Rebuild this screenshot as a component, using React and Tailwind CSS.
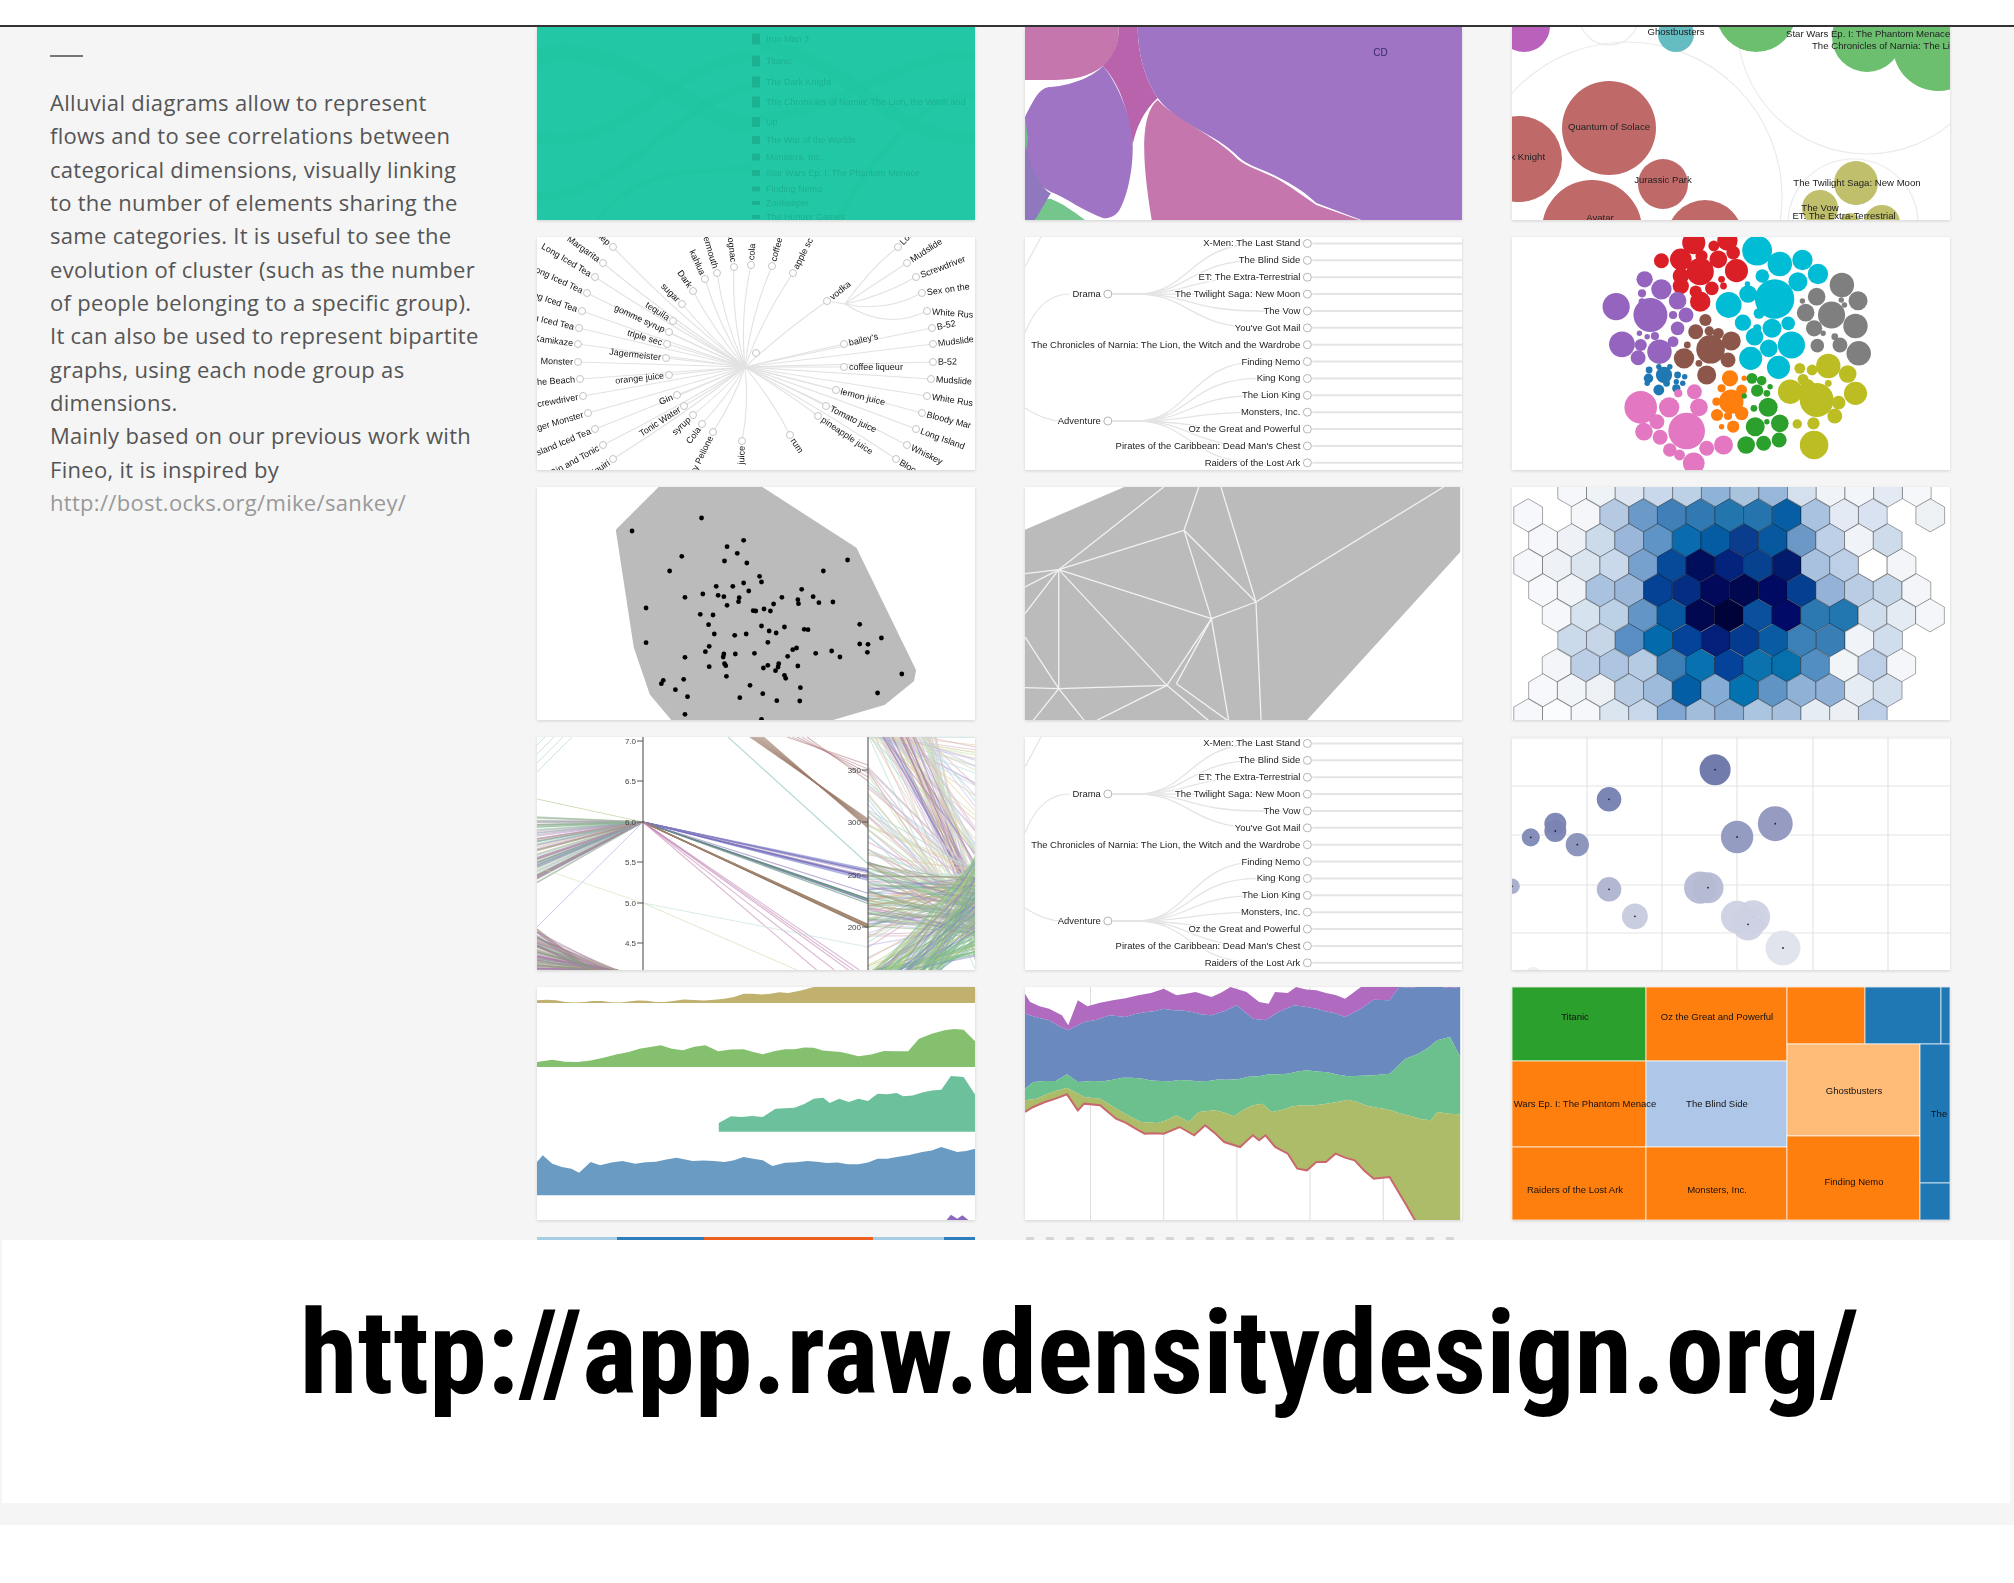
import React from 'react';

// dados dos gráficos, medidos a partir da referência
const SANS = 'Liberation Sans, Arial, sans-serif';

const movies = [
  'X-Men: The Last Stand', 'The Blind Side', 'ET: The Extra-Terrestrial', 'The Twilight Saga: New Moon',
  'The Vow', "You've Got Mail", 'The Chronicles of Narnia: The Lion, the Witch and the Wardrobe', 'Finding Nemo',
  'King Kong', 'The Lion King', 'Monsters, Inc.', 'Oz the Great and Powerful',
  "Pirates of the Caribbean: Dead Man's Chest", 'Raiders of the Lost Ark',
];

const Card = ({ children, className = 'h-[233px]' }) => (
  <div className={`bg-white overflow-hidden shadow-[0_1px_3px_rgba(0,0,0,0.14)] ${className}`}>{children}</div>
);

const Chart = ({ h = 233, children }) => (
  <svg viewBox={`0 0 438 ${h}`} width="100%" height={h} preserveAspectRatio="none" className="block blur-[0.7px]" fontFamily={SANS}>
    {children}
  </svg>
);

const Alluvial = () => {
  const labels = [
    ['Iron Man 3', 12, 11], ['Titanic', 34, 11], ['The Dark Knight', 55, 11],
    ['The Chronicles of Narnia: The Lion, the Witch and', 75, 11], ['Up', 95, 10], ['The War of the Worlds', 113, 8],
    ['Monsters, Inc.', 130, 7], ['Star Wars Ep. I: The Phantom Menace', 146, 6], ['Finding Nemo', 162, 5],
    ['Zookeeper', 176, 4], ['The Hunger Games', 190, 4],
  ];
  return (
    <Chart h={193}>
      <rect width="438" height="193" fill="#22c8a5" />
      <g fill="none" stroke="#1dbf9c" strokeOpacity="0.22">
        <path d="M0 30C90 10 150 90 215 100" strokeWidth="16" />
        <path d="M0 110C80 130 140 30 215 30" strokeWidth="10" />
        <path d="M0 170C90 170 140 70 215 60" strokeWidth="8" />
        <path d="M223 20C300 20 360 120 438 110" strokeWidth="12" />
        <path d="M223 90C300 90 370 20 438 30" strokeWidth="9" />
        <path d="M60 193C110 130 170 150 215 140" strokeWidth="5" />
        <path d="M300 193C340 120 400 60 438 70" strokeWidth="5" />
      </g>
      {labels.map(([t, y, bar]) => (
        <g key={t}>
          <rect x="215" y={y - bar / 2} width="8" height={bar} fill="#1cb191" />
          <text x="229" y={y + 3} fontSize="9" fill="#1cb191">{t}</text>
        </g>
      ))}
    </Chart>
  );
};

const Flows = () => (
  <Chart h={193}>
    <rect width="438" height="193" fill="#fff" />
    <path d="M0 0H94C94 25 85 35 78 39C65 50 45 53 30 53H0Z" fill="#c576ad" />
    <path d="M94 0H113C113 30 122 55 133 71C118 85 112 100 108 117C104 90 98 60 78 39C88 30 94 20 94 0Z" fill="#b863ab" />
    <path d="M113 0H438V193H337L292 176C280 165 272 160 259 153C240 142 225 140 214 130C190 105 155 100 133 71C122 55 113 30 113 0Z" fill="#a074c4" />
    <path d="M133 73C150 92 190 108 213 132C225 142 240 144 258 155C270 162 280 170 292 178L335 193H127C120 150 112 90 133 73Z" fill="#c576ad" />
    <path d="M78 39C92 55 108 90 108 120C108 150 100 175 94 184C90 190 82 192 78 191C60 185 40 170 26 165C10 155 0 150 0 135V90C10 70 15 60 26 60C50 58 70 48 78 39Z" fill="#a074c4" />
    <path d="M0 90L3 112L0 130Z" fill="#6cc08a" />
    <path d="M26 172C35 175 50 185 60 193H10C14 180 20 170 26 172Z" fill="#75c68c" />
    <path d="M0 120C10 150 20 165 26 166L10 193H0Z" fill="#8f78bd" />
    <text x="349" y="29" fontSize="10" fill="#3a2a66">CD</text>
  </Chart>
);

const Packed = () => {
  const circles = [
    [97, 101, 47, '#bf6a69'], [7, 132, 43, '#bf6a69'], [151, 157, 25, '#bf6a69'], [80, 203, 50, '#bf6a69'],
    [193, 211, 38, '#bf6a69'], [-8, 209, 14, '#bf6a69'], [244, -15, 40, '#6cbf6f'], [355, 10, 35, '#6cbf6f'],
    [426, 19, 45, '#6cbf6f'], [12, -1, 26, '#ba62bb'], [164, 7, 18, '#66bdc1'],
    [344, 156, 22, '#bfbf6c'], [308, 181, 18, '#bfbf6c'], [370, 196, 18, '#bfbf6c'], [338, 196, 10, '#bfbf6c'],
  ];
  const lines = [
    ['Ghostbusters', 164, 8, 'middle'], ['Star Wars Ep. I: The Phantom Menace', 274, 10, 'start'],
    ['The Chronicles of Narnia: The Lion, the Witch and the Wardrobe', 300, 22, 'start'], ['Quantum of Solace', 97, 103, 'middle'],
    ['Dark Knight', 8, 133, 'middle'], ['Jurassic Park', 151, 156, 'middle'], ['Avatar', 88, 194, 'middle'],
    ['The Twilight Saga: New Moon', 345, 159, 'middle'], ['The Vow', 308, 184, 'middle'],
    ['ET: The Extra-Terrestrial', 332, 192, 'middle'],
  ];
  return (
    <Chart h={193}>
      <rect width="438" height="193" fill="#fff" />
      <g fill="none" stroke="#ebebeb" strokeWidth="1.2">
        <circle cx="115" cy="170" r="155" />
        <circle cx="355" cy="-3" r="130" />
        <circle cx="341" cy="197" r="65" />
        <circle cx="97" cy="-12" r="30" />
      </g>
      {circles.map(([x, y, r, c], i) => <circle key={i} cx={x} cy={y} r={r} fill={c} />)}
      {lines.map(([t, x, y, a]) => <text key={t} x={x} y={y} fontSize="9.6" textAnchor={a} fill="#222">{t}</text>)}
    </Chart>
  );
};

const radialNodes = [
  [76, 10, 'Mint Julep'], [66, 26, 'Margarita'], [58, 40, 'Long Iced Tea'], [50, 56, 'Long Iced Tea'], [45, 74, 'Long Iced Tea'],
  [42, 91, 'Long Iced Tea'], [41, 107, 'Kamikaze'], [41, 125, 'Monster'], [43, 142, 'Sex on the Beach'], [46, 159, 'Screwdriver'],
  [51, 176, 'Jager Monster'], [58, 192, 'Island Iced Tea'], [66, 208, 'Gin and Tonic'], [76, 222, 'Daiquiri'],
  [145, 67, 'sugar'], [136, 84, 'tequila'], [132, 95, 'gomme syrup'], [130, 107, 'triple sec'], [129, 121, 'Jagermeister'],
  [132, 138, 'orange juice'], [140, 158, 'Gin'], [147, 169, 'Tonic Water'], [156, 178, 'syrup'], [165, 187, 'Cola'],
  [176, 195, 'Cherry Pellone'], [205, 204, 'juice'], [253, 198, 'rum'], [156, 54, 'Dark'], [168, 42, 'kahlua'], [180, 36, 'vermouth'],
  [197, 30, 'cognac'], [214, 28, 'cola'], [235, 29, 'coffee'], [256, 36, 'apple sc'], [290, 64, 'vodka'],
  [395, 91, 'B-52'], [396, 107, 'Mudslide'], [396, 125, 'B-52'], [394, 142, 'Mudslide'], [390, 159, 'White Rus'],
  [385, 176, 'Bloody Mar'], [379, 192, 'Long Island'], [370, 208, 'Whiskey'], [359, 222, 'Bloody'],
  [307, 107, "bailey's"], [307, 130, 'coffee liqueur'], [299, 153, 'lemon juice'], [289, 169, 'Tomato juice'], [281, 179, 'pineapple juice'],
];
const vodkaNodes = [[361, 10, 'Long'], [370, 26, 'Mudslide'], [379, 40, 'Screwdriver'], [385, 56, 'Sex on the'], [390, 74, 'White Rus']];

const Radial = () => {
  const cx = 208;
  const cy = 130;
  const label = ([x, y, t], ox, oy) => {
    const ang = (Math.atan2(y - oy, x - ox) * 180) / Math.PI;
    const left = x < ox;
    return (
      <text key={t + x} transform={`translate(${x} ${y}) rotate(${left ? ang + 180 : ang})`} x={left ? -5 : 5} y="3" fontSize="9" textAnchor={left ? 'end' : 'start'} fill="#111">{t}</text>
    );
  };
  return (
    <Chart>
      <rect width="438" height="233" fill="#fff" />
      <g fill="none" stroke="#e2e2e2" strokeWidth="1.1">
        {radialNodes.map(([x, y, t]) => <path key={t + x} d={`M${cx} ${cy}Q${(cx + x) / 2 + (y - cy) * 0.08} ${(cy + y) / 2} ${x} ${y}`} />)}
        {vodkaNodes.map(([x, y, t]) => <path key={t} d={`M308 67Q${(308 + x) / 2} ${y + 20} ${x} ${y}`} />)}
        <path d="M290 64L308 67" />
      </g>
      <g fill="#fff" stroke="#c4c4c4">
        {[...radialNodes, ...vodkaNodes, [219, 116, '']].map(([x, y], i) => <circle key={i} cx={x} cy={y} r="3.5" />)}
      </g>
      {radialNodes.map((n) => label(n, cx, cy))}
      {vodkaNodes.map((n) => label(n, 308, 67))}
    </Chart>
  );
};

const Dendrogram = () => (
  <Chart>
    <rect width="438" height="233" fill="#fff" />
    <g fill="none" stroke="#e4e4e4">
      {movies.map((_, i) => {
        const y = 6.5 + i * 16.87;
        const from = i < 6 ? 57 : 184;
        return (
          <g key={i}>
            <line x1="288" y1={y} x2="438" y2={y} strokeWidth="2" />
            {i !== 6 && <path d={`M88 ${from}H112C165 ${from} 165 ${y} 235 ${y}H270`} strokeWidth="1.3" />}
          </g>
        );
      })}
      <path d="M0 96C10 70 25 57 45 57" strokeWidth="1.2" />
      <path d="M0 171C15 180 25 184 38 184" strokeWidth="1.2" />
      <path d="M16 0L0 30" strokeWidth="1.2" />
    </g>
    {movies.map((m, i) => {
      const y = 6.5 + i * 16.87;
      return (
        <g key={m}>
          <text x="276" y={y + 3} fontSize="9.5" textAnchor="end" fill="#222" stroke="#fff" strokeWidth="2.5" paintOrder="stroke">{m}</text>
          <circle cx="283" cy={y} r="4" fill="#fff" stroke="#b4b4b4" />
        </g>
      );
    })}
    {[['Drama', 57], ['Adventure', 184]].map(([t, y]) => (
      <g key={t}>
        <text x="76" y={y + 3} fontSize="9.5" textAnchor="end" fill="#222">{t}</text>
        <circle cx="83" cy={y} r="4" fill="#fff" stroke="#b4b4b4" />
      </g>
    ))}
  </Chart>
);

const packGroups = [
  ['#db1f26', [[1072,728,17],[1124,722,15],[1022,782,11],[1052,778,16],[1082,815,20],[1110,778,13],[1133,758,10],[1103,738,8],[1138,812,17],[1084,768,9],[1052,828,12],[1082,905,15],[1052,858,12],[1100,865,10],[1075,875,9],[1118,858,5],[1115,838,5]]],
  ['#00bcd4', [[1170,752,22],[1205,792,18],[1240,780,15],[1264,822,15],[1233,845,14],[1197,897,29],[1156,882,13],[1178,828,10],[1126,915,19],[1148,968,12],[1173,940,8],[1193,985,14],[1218,970,10],[1166,1010,13],[1223,1035,20],[1188,1045,13],[1160,1075,17],[1203,1102,17],[1155,852,4],[1170,985,6]]],
  ['#7f7f7f', [[1301,855,18],[1326,902,14],[1262,890,13],[1245,938,13],[1285,945,20],[1322,978,18],[1258,985,12],[1263,1037,10],[1298,1035,11],[1327,1060,18],[1240,903,4],[1300,900,4],[1305,915,4],[1272,1000,4],[1290,1010,5]]],
  ['#9564bf', [[996,838,12],[1022,868,15],[992,880,6],[952,920,20],[1005,945,25],[1047,902,13],[1060,945,11],[1040,945,6],[1047,985,10],[992,905,5],[961,1033,19],[1019,1055,18],[986,1073,11],[990,1035,9],[1040,1025,8],[1012,1008,6],[988,1000,4],[1000,1010,4]]],
  ['#8c564b', [[1090,960,9],[1075,995,11],[1098,1048,21],[1130,1023,14],[1057,1075,15],[1092,1125,14],[1110,1000,8],[1096,993,7],[1125,1080,11],[1062,1035,5],[1080,1090,5]]],
  ['#1f77b4', [[1026,1125,12],[1003,1110,5],[1002,1135,7],[1018,1170,8],[1045,1165,6],[1047,1125,5],[1058,1130,4],[1035,1100,4],[1000,1150,4],[1055,1150,4],[1030,1150,5],[1045,1145,4],[1018,1100,4]]],
  ['#ff7f0e', [[1128,1135,12],[1130,1205,18],[1108,1245,9],[1146,1240,10],[1125,1248,6],[1133,1280,9],[1146,1170,8],[1107,1205,6],[1115,1165,6],[1150,1135,4],[1115,1280,4]]],
  ['#2ca02c', [[1162,1135,8],[1177,1142,7],[1170,1172,9],[1187,1222,14],[1150,1188,4],[1165,1225,5],[1205,1270,13],[1167,1280,14],[1204,1320,11],[1153,1335,13],[1180,1330,11],[1185,1180,5],[1190,1160,4],[1185,1265,4]]],
  ['#bcbd22', [[1280,1098,18],[1310,1122,13],[1221,1175,18],[1262,1200,25],[1322,1180,17],[1296,1208,10],[1290,1248,11],[1258,1335,21],[1248,1160,11],[1236,1105,8],[1255,1110,8],[1241,1138,8],[1232,1272,7],[1257,1270,9],[1280,1150,5]]],
  ['#e377c2', [[990,1222,24],[1034,1222,15],[1061,1293,27],[1073,1175,11],[1080,1222,13],[1015,1265,11],[995,1295,13],[1020,1312,11],[1035,1350,10],[1092,1345,11],[1118,1335,14],[1050,1365,8],[1072,1390,16],[1048,1180,6]]],
];

const CirclePacking = () => (
  <Chart>
    <rect width="438" height="233" fill="#fff" />
    {packGroups.map(([c, list]) => list.map(([x, y, r], i) => (
      <circle key={`${c}-${i}`} cx={(x - 791) / 1.546} cy={y / 3 - 237} r={(r * 1.05) / 1.546} fill={c} />
    )))}
  </Chart>
);

// pontos do convex hull, em coordenadas do zoom
const hullDots = [[284,113],[175,152],[350,180],[324,199],[340,219],[253,228],[320,242],[355,248],[513,239],[234,272],[475,272],[375,288],[378,305],[350,308],[333,318],[307,318],[358,332],[441,327],[286,341],[310,345],[319,349],[258,351],[343,352],[410,351],[459,349],[435,358],[436,370],[468,367],[490,365],[342,364],[324,375],[397,371],[197,383],[382,386],[365,391],[369,392],[392,392],[282,402],[302,404],[295,433],[378,437],[414,440],[445,447],[451,448],[390,452],[401,458],[304,461],[354,461],[336,465],[532,432],[566,473],[388,486],[197,487],[532,491],[545,492],[296,498],[433,503],[427,508],[290,514],[488,512],[463,519],[544,516],[501,530],[337,521],[319,521],[367,519],[318,530],[258,531],[419,528],[388,555],[405,550],[381,563],[296,559],[320,550],[322,556],[404,560],[400,571],[435,557],[414,585],[416,594],[323,588],[598,581],[256,597],[224,600],[221,610],[360,615],[439,622],[243,628],[380,640],[560,638],[262,649],[344,652],[402,661],[438,662],[258,702],[378,717]];
const hx = (z) => (z - 26) / 1.568;
const hy = (z) => (z - 20) / 3;

const Hull = () => {
  const poly = [[220,20],[375,20],[525,205],[618,570],[615,600],[570,670],[480,720],[240,720],[205,640],[180,500],[152,150]];
  return (
    <Chart>
      <rect width="438" height="233" fill="#fff" />
      <polygon points={poly.map(([x, y]) => `${hx(x)},${hy(y)}`).join(' ')} fill="#bbb" stroke="#bbb" strokeWidth="3" strokeLinejoin="round" />
      {hullDots.map(([x, y], i) => <circle key={i} cx={hx(x)} cy={hy(y)} r="2.4" fill="#000" />)}
    </Chart>
  );
};

const Voronoi = () => {
  const vx = (z) => (z - 792) / 1.568;
  const segs = [[845,268,1010,20],[1042,150,1065,20],[1100,20,1155,365],[1450,20,1155,365],[845,268,1042,150],[1042,150,1085,415],[1042,150,1155,365],[1085,415,1155,365],[845,268,1085,415],[792,280,845,268],[792,320,845,268],[792,400,845,268],[845,268,845,625],[845,268,1015,615],[792,470,845,625],[792,622,845,625],[845,625,1015,615],[845,625,805,720],[845,625,885,720],[1015,615,905,720],[1015,615,1085,415],[1085,415,1030,610],[1015,615,1080,720],[1030,610,1110,720],[1085,415,1112,720],[1155,365,1163,720]];
  const poly = [[792,148],[948,20],[1476,20],[1476,215],[1235,720],[792,720]];
  return (
    <Chart>
      <rect width="438" height="233" fill="#fff" />
      <polygon points={poly.map(([x, y]) => `${vx(x)},${hy(y)}`).join(' ')} fill="#bbb" />
      {segs.map(([a, b, c, d], i) => <line key={i} x1={vx(a)} y1={hy(b)} x2={vx(c)} y2={hy(d)} stroke="#f2f2f2" strokeWidth="1.3" />)}
    </Chart>
  );
};

// cada linha: y no zoom, x inicial no zoom, cores (null = sem hexágono)
const hexRows = [
  [30, 885, ['#f5f7fa','#eef3f8','#dde6f1','#c9d8ea','#bcd0e6','#8fb2d8','#a9c3df','#97b6da','#d5e0ee','#f0f3f8','#f2f5f9','#e4eaf3','#f5f7fa']],
  [105, 817, ['#f6f8fb',null,'#f4f6fa','#b5c9e2','#6b9ac8','#417fb8','#3179b2','#2375ae','#2574ae','#075ea4','#a9c2df','#e3eaf3','#d8e2f0',null,'#edf1f4']],
  [180, 840, ['#f5f7fa','#eef2f6','#ccdbea','#9ab7d9','#5f94c6','#0a6caf','#065ca3','#0a3d8e','#08589f','#6b98c6','#bdd0e7','#f0f3f8','#cddbeb']],
  [255, 817, ['#f5f7fa','#eef2f6','#dbe5f0','#c9d8ea','#76a0cd','#064a99','#010e5c','#03237d','#06428f','#021b6c','#a8c1de','#bccfe6','#ffffff','#f3f5f9']],
  [330, 840, ['#f6f8fb','#f0f3f7','#a9c2df','#9ab6d8','#054296','#052d82','#02085a','#020850','#010a63','#053f92','#94b2d8','#b9cce4','#c5d5e8','#f3f5f9']],
  [405, 861, ['#f5f7fa','#d7e2ef','#bcd0e6','#6396c6','#06579f','#01084f','#00033a','#0a509c','#010a66','#2c78b1','#2277b0','#cfdcec','#e5ebf3','#f4f6fa']],
  [480, 885, ['#cbdaea','#c6d5e8','#588ec3','#036aac','#05439a','#031f7a','#043b90','#0a5ca2','#3c80b8','#3a7eb6','#f0f3f7','#d0ddec']],
  [555, 861, ['#f3f5f9','#bbcee5','#adc5e0','#b5cbe3','#3b7fb6','#0871b0','#05429a','#0b72ae','#0670ad','#528ec1','#f2f5f8','#bccfe6','#f4f6fa']],
  [630, 840, ['#f6f8fb','#f2f5f8','#edf1f5','#b7cbe3','#9fbbdb','#045ea5','#85acd4','#0472b0','#6094c5','#8fb1d6','#90b0d6','#e6ecf3','#d3dfed',null,null,'#f3f5f9']],
  [705, 817, ['#f6f8fb','#fbfcfd','#f5f7fa','#dbe5f0','#c8d7ea','#7ea6d0','#a2bddc','#8badd4','#abc4df','#a5bfdd','#e6ecf3','#ecf0f5','#bccfe6']],
];

const Hexbin = () => {
  const r = 16.6;
  const w = (r * Math.sqrt(3)) / 2;
  const hex = (cx, cy) => `${cx},${cy - r} ${cx + w},${cy - r / 2} ${cx + w},${cy + r / 2} ${cx},${cy + r} ${cx - w},${cy + r / 2} ${cx - w},${cy - r / 2}`;
  return (
    <Chart>
      <rect width="438" height="233" fill="#fff" />
      {hexRows.map(([zy, zx, colors]) => colors.map((c, i) => (c ? (
        <polygon key={`${zy}-${i}`} points={hex((zx + i * 44.4 - 792) / 1.546, (zy - 20) / 3)} fill={c} stroke="#000" strokeOpacity="0.38" strokeWidth="0.9" />
      ) : null)))}
    </Chart>
  );
};

// gerador simples para as linhas das coordenadas paralelas
let seed = 7;
const rnd = () => {
  seed = (seed * 16807) % 2147483647;
  return seed / 2147483647;
};
const parallelColors = ['#7f9f6f', '#a878b0', '#7fb8b0', '#8d7fc8', '#c7a07f', '#84c084', '#c08fa8', '#9ccb9c'];
const paleColors = ['#e6cfa8', '#dcb4c4', '#c8c4ec', '#b8dcd8', '#d0e4b8'];
const pick = () => parallelColors[Math.floor(rnd() * parallelColors.length)];

// [x1, y1, x2, y2, cor, opacidade, espessura]
const parallelLines = [];
for (let i = 0; i < 90; i++) parallelLines.push([0, 80 + rnd() * 66, 106, 85, pick(), 0.42, 1.3]);
for (let i = 0; i < 70; i++) parallelLines.push([0, 192 + rnd() * 41, 50 + rnd() * 32, 233, ['#a08f80', '#a878b0', '#7f9f8f', '#b0a090'][i % 4], 0.55, 1.3]);
for (let i = 0; i < 4; i++) parallelLines.push([8 + i * 9, 0, 0, 8 + i * 9, '#a8d0d0', 0.6, 1]);
for (let i = 0; i < 16; i++) parallelLines.push([106, 85, 331, 132 + rnd() * 12, ['#6c6cc0', '#8a8ad0', '#9a80b8'][i % 3], 0.5, 1.2]);
for (let i = 0; i < 8; i++) parallelLines.push([106, 85, 331, 155 + rnd() * 12, ['#4f8f6f', '#8a78b8'][i % 2], 0.6, 1.2]);
for (let i = 0; i < 10; i++) parallelLines.push([106, 85, 331, 187 + rnd() * 5, ['#8a7060', '#a88a70'][i % 2], 0.65, 1.2]);
for (let i = 0; i < 5; i++) parallelLines.push([106, 85, 277 + rnd() * 50, 233, '#c080b0', 0.55, 1.1]);
for (let i = 0; i < 10; i++) parallelLines.push([213 + i * 1.5, 0, 331, 82 + i, '#9a7a68', 0.55, 1.2]);
for (let i = 0; i < 5; i++) parallelLines.push([250 + i * 5, 0, 331, 28 + i * 4, ['#a8706a', '#b88a9a'][i % 2], 0.5, 1.1]);
for (let i = 0; i < 90; i++) parallelLines.push([331 + rnd() * 70, 0, 438, rnd() * 233, paleColors[i % 5], 0.6, 1.1]);
for (let i = 0; i < 16; i++) parallelLines.push([345 + rnd() * 35, 0, 438, 110 + rnd() * 70, ['#8d7fc8', '#a878b0', '#b08a78'][i % 3], 0.5, 1.2]);
for (let i = 0; i < 80; i++) parallelLines.push([331, 30 + rnd() * 203, 438, 130 + rnd() * 70, paleColors[i % 5], 0.7, 1.2]);
for (let i = 0; i < 70; i++) parallelLines.push([331, 125 + rnd() * 70, 438, 140 + rnd() * 60, pick(), 0.42, 1.3]);
for (let i = 0; i < 110; i++) parallelLines.push([335 + rnd() * 70, 233, 438, 120 + rnd() * 100, ['#84c084', '#7fb8b0', '#b8c880', '#8d7fc8', '#84c084'][i % 5], 0.5, 1.3]);

const Parallel = () => (
  <Chart>
    <rect width="438" height="233" fill="#fff" />
    {parallelLines.map(([a, b, c, d, col, op, sw], i) => <line key={i} x1={a} y1={b} x2={c} y2={d} stroke={col} strokeOpacity={op} strokeWidth={sw} />)}
    <line x1="191" y1="0" x2="331" y2="127" stroke="#a8d0d0" strokeWidth="1.2" opacity="0.8" />
    <line x1="0" y1="62" x2="106" y2="85" stroke="#cfe0b8" strokeWidth="1" />
    <line x1="0" y1="130" x2="106" y2="166" stroke="#cfe0b8" strokeWidth="1" opacity="0.6" />
    <line x1="106" y1="166" x2="260" y2="233" stroke="#cfe0b8" strokeWidth="1" opacity="0.7" />
    <line x1="106" y1="166" x2="331" y2="210" stroke="#bfe0d8" strokeWidth="1" opacity="0.6" />
    <line x1="0" y1="190" x2="106" y2="85" stroke="#c8c8ec" strokeWidth="1" />
    <line x1="106" y1="0" x2="106" y2="233" stroke="#444" strokeWidth="1" />
    <line x1="331" y1="0" x2="331" y2="233" stroke="#444" strokeWidth="1" />
    {[['7.0', 4], ['6.5', 44], ['6.0', 85], ['5.5', 125], ['5.0', 166], ['4.5', 206]].map(([t, y]) => (
      <g key={t}>
        <text x="99" y={y + 3} fontSize="8" textAnchor="end" fill="#444">{t}</text>
        <line x1="100" y1={y} x2="106" y2={y} stroke="#555" />
      </g>
    ))}
    {[['350', 33], ['300', 85], ['250', 138], ['200', 190]].map(([t, y]) => (
      <g key={t}>
        <text x="324" y={y + 3} fontSize="8" textAnchor="end" fill="#444">{t}</text>
        <line x1="325" y1={y} x2="331" y2={y} stroke="#555" />
      </g>
    ))}
  </Chart>
);

const bubbles = [
  [1106,868,24,'#6a75a8'],[942,957,19,'#7580b0'],[859,1030,17,'#7a84b2'],[859,1052,17,'#7a84b2'],[821,1071,14,'#7e88b4'],[893,1093,18,'#8890b9'],
  [1140,1070,25,'#8f97bf'],[1199,1030,27,'#9097be'],[792,1218,12,'#a4abca'],[942,1227,19,'#aeb4d0'],[1083,1222,25,'#b5bad4'],[1095,1222,24,'#b5bad4'],
  [982,1308,20,'#c6cade'],[1140,1310,25,'#cdd1e3'],[1165,1310,26,'#cdd1e3'],[1157,1332,25,'#cdd1e3'],[1211,1403,27,'#dfe1ec'],[825,1485,13,'#eceef5'],
];

const Bubbles = () => (
  <Chart>
    <rect width="438" height="233" fill="#fff" />
    <g stroke="#e4e4e4" strokeWidth="1.2">
      {[75, 150, 225, 301, 376].map((x) => <line key={x} x1={x} y1="0" x2={x} y2="233" />)}
      {[1, 49, 98, 148, 196].map((y) => <line key={y} x1="0" y1={y} x2="438" y2={y} />)}
    </g>
    {bubbles.map(([x, y, r, c], i) => (
      <g key={i}>
        <circle cx={(x - 792) / 1.546} cy={(y - 770) / 3} r={r / 1.546} fill={c} fillOpacity="0.95" />
        <circle cx={(x - 792) / 1.546} cy={(y - 770) / 3} r="0.9" fill="#222" />
      </g>
    ))}
  </Chart>
);

// coordenadas do zoom da linha 5
const ax = (z) => (z - 26) / 1.568;
const sx = (z) => (z - 792) / 1.568;
const ry = (z) => (z - 50) / 3;
const toPts = (pts, fx) => pts.map(([x, y]) => `${fx(x)},${ry(y)}`).join(' ');

// quebra os segmentos e adiciona um pouco de ruído, para o contorno ficar serrilhado
const rough = (pts) => {
  const out = [];
  pts.forEach((p, i) => {
    out.push(p);
    const n = pts[i + 1];
    if (!n || n[0] - p[0] < 14) return;
    const steps = Math.floor((n[0] - p[0]) / 14);
    for (let s = 1; s < steps; s++) {
      const t = s / steps;
      const wob = Math.sin((p[0] + s * 14) * 1.7) * 3;
      out.push([p[0] + (n[0] - p[0]) * t, p[1] + (n[1] - p[1]) * t + wob]);
    }
  });
  return out;
};

const areas = [
  ['#c0b26e', [...rough([[26,90],[100,95],[240,92],[320,85],[350,70],[420,68],[460,50]]), [713,50],[713,98],[26,98]]],
  ['#85c06f', [...rough([[26,275],[50,268],[90,275],[130,262],[170,245],[220,225],[255,240],[290,225],[310,243],[350,237],[380,252],[415,237],[460,232],[530,258],[570,242],[608,243],[625,205],[665,180],[695,178],[713,213]]), [713,290],[26,290]]],
  ['#6cc09b', [...rough([[311,484],[311,458],[330,438],[380,440],[400,415],[430,412],[460,385],[475,382],[485,398],[500,385],[515,395],[530,385],[545,392],[560,370],[590,368],[600,378],[660,358],[675,317],[695,320],[713,373]]), [713,484]]],
  ['#6a9cc3', [...rough([[26,575],[35,555],[50,580],[80,595],[92,607],[110,575],[125,585],[160,572],[180,580],[245,562],[270,572],[320,575],[350,560],[380,570],[395,587],[415,577],[450,572],[480,578],[530,582],[560,565],[590,560],[630,545],[660,530],[685,545],[713,535]]), [713,675],[26,675]]],
  ['#8a68c0', [[668,750],[675,733],[685,745],[693,735],[703,750]]],
];

const Areas = () => (
  <Chart>
    <rect width="438" height="233" fill="#fff" />
    {areas.map(([c, p]) => <polygon key={c} points={toPts(p, ax)} fill={c} />)}
  </Chart>
);

const purpleTop = rough([[792,70],[800,95],[830,115],[850,135],[860,165],[875,90],[890,108],[930,90],[970,75],[1010,55],[1030,75],[1060,65],[1085,80],[1115,50],[1140,65],[1160,95],[1175,100],[1185,65],[1205,68],[1218,50],[1250,60],[1295,85],[1320,50],[1380,50]]);
const blueTop = rough([[792,130],[830,150],[860,180],[885,155],[925,135],[950,140],[1010,115],[1085,135],[1125,105],[1150,145],[1170,150],[1190,125],[1215,105],[1250,115],[1295,140],[1320,115],[1340,88],[1365,90],[1380,50],[1476,50]]);
const greenTop = rough([[792,355],[805,335],[840,332],[858,312],[875,335],[900,332],[960,322],[1020,333],[1110,328],[1160,318],[1235,300],[1300,318],[1340,315],[1365,310],[1390,265],[1410,250],[1440,210],[1460,200],[1476,260]]);
const oliveTop = rough([[792,390],[810,385],[840,362],[858,352],[885,380],[910,385],[940,420],[975,455],[1000,458],[1030,435],[1050,455],[1065,425],[1090,420],[1120,438],[1150,405],[1165,400],[1180,425],[1225,405],[1265,400],[1300,388],[1385,432],[1430,450],[1440,425],[1476,432]]);
const redEdge = rough([[792,425],[805,410],[840,385],[858,372],[875,420],[885,400],[910,405],[935,445],[980,490],[1010,490],[1035,470],[1058,495],[1075,465],[1105,515],[1130,530],[1150,495],[1160,510],[1170,495],[1185,530],[1205,550],[1220,595],[1235,600],[1250,575],[1265,575],[1280,550],[1310,570],[1340,625],[1365,620],[1390,700],[1405,750]]);

const Stream = () => (
  <Chart>
    <rect width="438" height="233" fill="#fff" />
    {[895, 1010, 1125, 1240, 1355].map((x) => <line key={x} x1={sx(x)} y1="0" x2={sx(x)} y2="233" stroke="#ddd" />)}
    <polygon points={toPts([...purpleTop, ...[...blueTop].reverse()], sx)} fill="#b06abf" />
    <polygon points={toPts([...blueTop, ...[...greenTop].reverse()], sx)} fill="#6a89bf" />
    <polygon points={toPts([...greenTop, ...[...oliveTop].reverse()], sx)} fill="#6bc08d" />
    <polygon points={toPts([...oliveTop, [1476,750], ...[...redEdge].reverse()], sx)} fill="#adbc68" />
    <polyline points={toPts(redEdge, sx)} fill="none" stroke="#c9686c" strokeWidth="2" />
  </Chart>
);

const treemap = [
  [0, 0, 134, 74, '#2ca02c', 'Titanic', 63, 33],
  [134, 0, 141, 74, '#ff7f0e', 'Oz the Great and Powerful', 205, 33],
  [275, 0, 78, 57, '#ff7f0e'],
  [353, 0, 76, 57, '#1f77b4'],
  [429, 0, 9, 57, '#1f77b4'],
  [0, 74, 134, 86, '#ff7f0e', 'Star Wars Ep. I: The Phantom Menace', 63, 120],
  [134, 74, 141, 86, '#aec7e8', 'The Blind Side', 205, 120],
  [0, 160, 134, 73, '#ff7f0e', 'Raiders of the Lost Ark', 63, 206],
  [134, 160, 141, 73, '#ff7f0e', 'Monsters, Inc.', 205, 206],
  [275, 57, 133, 92, '#ffbb78', 'Ghostbusters', 342, 107],
  [275, 149, 133, 84, '#ff7f0e', 'Finding Nemo', 342, 198],
  [408, 57, 30, 139, '#1f77b4', 'The', 427, 130],
  [408, 196, 30, 37, '#1f77b4'],
];

const Treemap = () => (
  <Chart>
    {treemap.map(([x, y, w, h, c], i) => <rect key={i} x={x} y={y} width={w} height={h} fill={c} stroke="#fff" strokeOpacity="0.7" strokeWidth="1" />)}
    {treemap.filter((t) => t[5]).map(([, , , , , t, tx, ty]) => <text key={t} x={tx} y={ty} fontSize="9.5" textAnchor="middle" fill="#111">{t}</text>)}
  </Chart>
);

const Peek = () => (
  <div className="flex h-[3px]">
    <div className="w-[80px] bg-[#a5cde3]" />
    <div className="w-[87px] bg-[#2d7fbc]" />
    <div className="w-[169px] bg-[#ee6020]" />
    <div className="w-[71px] bg-[#a5cde3]" />
    <div className="w-[31px] bg-[#2d7fbc]" />
  </div>
);

const Dashes = () => (
  <div className="flex gap-[12px] pl-[1px]">
    {Array.from({ length: 22 }).map((_, i) => <div key={i} className="w-[8px] h-[3px] bg-[#d5d5d5]" />)}
  </div>
);

export default function App() {
  return (
    <div className="h-[1583px] bg-white">
      <div className="h-[27px] bg-white border-b-2 border-[#333]" />

      <div className="relative h-[1498px] bg-[#f5f5f5] overflow-hidden flex">
        <aside className="w-[537px] shrink-0 pl-[50px] pt-[28px] font-['Open_Sans',sans-serif] text-[22px] tracking-[0.3px] leading-[33.35px] text-[#555] whitespace-nowrap">
          <div className="w-[33px] h-[2px] bg-[#777] mb-[29px]" />
          <p>
            Alluvial diagrams allow to represent<br />
            flows and to see correlations between<br />
            categorical dimensions, visually linking<br />
            to the number of elements sharing the<br />
            same categories. It is useful to see the<br />
            evolution of cluster (such as the number<br />
            of people belonging to a specific group).<br />
            It can also be used to represent bipartite<br />
            graphs, using each node group as<br />
            dimensions.
          </p>
          <p>Mainly based on our previous work with<br />Fineo, it is inspired by</p>
          <a className="text-[#999]" href="#">http://bost.ocks.org/mike/sankey/</a>
        </aside>

        <div className="grid grid-cols-[438px_437px_438px] gap-x-[50px] gap-y-[17px] content-start">
          <Card className="h-[193px]"><Alluvial /></Card>
          <Card className="h-[193px]"><Flows /></Card>
          <Card className="h-[193px]"><Packed /></Card>
          <Card><Radial /></Card>
          <Card><Dendrogram /></Card>
          <Card><CirclePacking /></Card>
          <Card><Hull /></Card>
          <Card><Voronoi /></Card>
          <Card><Hexbin /></Card>
          <Card><Parallel /></Card>
          <Card><Dendrogram /></Card>
          <Card><Bubbles /></Card>
          <Card><Areas /></Card>
          <Card><Stream /></Card>
          <Card><Treemap /></Card>
          <Peek />
          <Dashes />
        </div>

        {/* faixa branca com o endereço, por cima da grade */}
        <div className="absolute left-[2px] right-[4px] top-[1213px] h-[263px] bg-white flex items-center pl-[298px] pb-[36px]">
          <span className="font-['Roboto',sans-serif] font-bold text-[116.7px] leading-none text-black whitespace-nowrap [font-stretch:75%]">
            http://app.raw.densitydesign.org/
          </span>
        </div>
      </div>
    </div>
  );
}
